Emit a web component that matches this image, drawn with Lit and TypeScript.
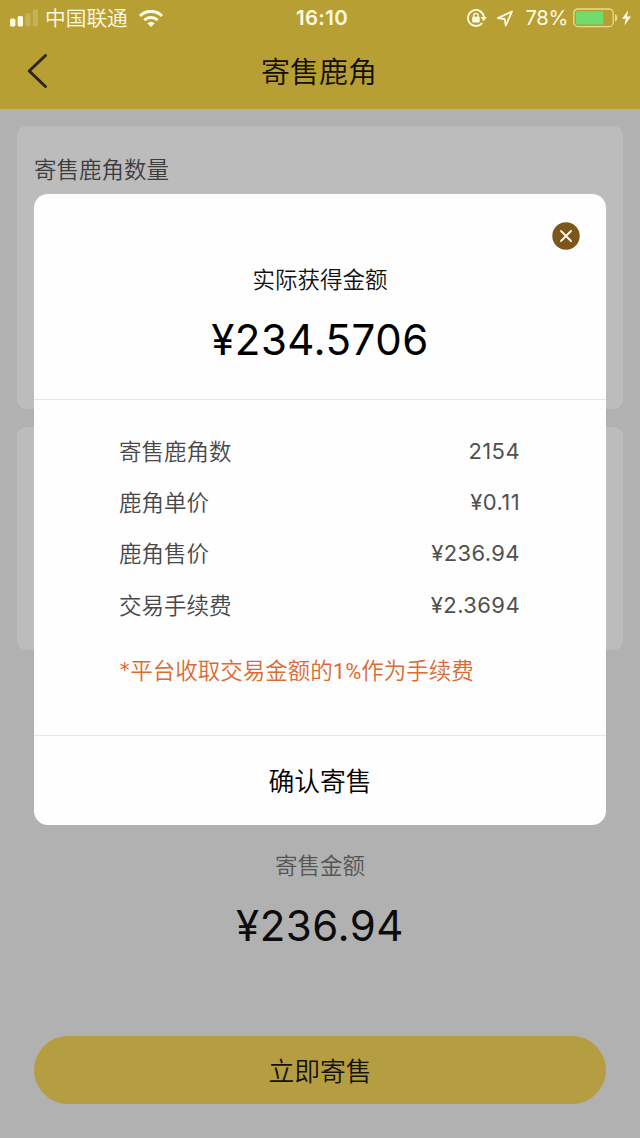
import { LitElement, html, css } from "lit";
import { customElement } from "lit/decorators.js";

const ROWS: [string, string][] = [
  ["寄售鹿角数", "2154"],
  ["鹿角单价", "¥0.11"],
  ["鹿角售价", "¥236.94"],
  ["交易手续费", "¥2.3694"],
];

@customElement("status-bar")
class StatusBar extends LitElement {
  static styles = css`
    :host { display: grid; grid-template-columns: 1fr auto 1fr; align-items: center; height: 36px; padding: 0 9px 0 10px; color: #fffbe0; box-sizing: border-box; }
    .side { display: flex; align-items: center; }
    .right { justify-content: flex-end; }
    .carrier { font-size: 20.7px; line-height: 34px; margin: 2px 11px 0 7px; font-weight: 350; }
    .time { font-size: 20.4px; font-weight: 600; letter-spacing: 0.4px; padding: 0 0 2px 3px; }
    .pct { font-size: 20.2px; letter-spacing: -0.3px; margin: -2px 5px 0 11px; }
    svg { display: block; }
    .loc { margin-left: 9px; }
    .bolt { margin-left: 4px; }
  `;
  render() {
    return html`
      <div class="side">
        <svg width="28" height="18" viewBox="0 0 28 18" fill="#fffbe0">
          <rect x="0" y="9.5" width="5.4" height="8" rx="1.6" />
          <rect x="7.6" y="7" width="5.4" height="10.5" rx="1.6" />
          <rect x="15.2" y="4" width="5.4" height="13.5" rx="1.6" opacity=".2" />
          <rect x="22.8" y="0.5" width="5.4" height="17" rx="1.6" opacity=".2" />
        </svg>
        <span class="carrier">中国联通</span>
        <svg width="24" height="17" viewBox="0 0 24 17" fill="none" stroke="#fffbe0">
          <path d="M1 5.9a15.6 15.6 0 0 1 22 0" stroke-width="3.2" />
          <path d="M5.4 10.3a9.4 9.4 0 0 1 13.2 0" stroke-width="3" />
          <path d="M12 17l-3.7-3.8a5.3 5.3 0 0 1 7.4 0z" fill="#fffbe0" stroke="none" />
        </svg>
      </div>
      <span class="time">16:10</span>
      <div class="side right">
        <svg width="20" height="18" viewBox="0 0 20 18" fill="none" stroke="#fffbe0">
          <path d="M15.2 14A8 8 0 1 1 16.9 8" stroke-width="1.8" />
          <path d="M13.6 8h6.2l-3.1 4.2z" fill="#fffbe0" stroke="none" />
          <path d="M6.7 8.3V6.6a2.2 2.2 0 0 1 4.4 0v1.7" stroke-width="1.4" />
          <rect x="5.1" y="7.8" width="7.6" height="5.6" rx=".8" fill="#fffbe0" stroke="none" />
        </svg>
        <svg class="loc" width="18" height="17" viewBox="0 0 18 17" fill="none" stroke="#fffbe0" stroke-width="1.8" stroke-linejoin="round">
          <path d="M1.8 8.1L16 1.5 9.8 15.4 8.6 9z" />
        </svg>
        <span class="pct">78%</span>
        <svg width="45" height="20" viewBox="0 0 45 20">
          <rect x=".8" y="1" width="39.4" height="17.6" rx="4.2" fill="none" stroke="#ecdc8e" stroke-width="1.3" />
          <rect x="3" y="3.2" width="27.3" height="13.2" rx="1.6" fill="#6fdc6d" />
          <path d="M42 6.3c3.2 1 3.2 6 0 7z" fill="#ecdc8e" />
        </svg>
        <svg class="bolt" width="9" height="16" viewBox="0.6 0 9.7 16" fill="#fffbe0" preserveAspectRatio="none">
          <path d="M7.2.3L.6 8.8h4L3.2 15.6 10.3 6.4H6z" />
        </svg>
      </div>
    `;
  }
}

@customElement("confirm-dialog")
class ConfirmDialog extends LitElement {
  static styles = css`
    :host { display: flex; flex-direction: column; height: 631px; background: #fefefe; border-radius: 14px; overflow: hidden; }
    .head { height: 206px; box-sizing: border-box; border-bottom: 1.5px solid #e6e6e6; display: flex; flex-direction: column; align-items: center; }
    .close { align-self: flex-end; margin: 28px 26px 0 0; width: 28px; height: 28px; }
    .label { font-size: 22.5px; line-height: 32px; margin-top: 14px; color: #111; font-weight: 350; }
    .amount { font-size: 42px; line-height: 50px; margin-top: 19px; color: #000; letter-spacing: 0.5px; }
    .body { flex: 1; padding: 26px 86px 0 85px; }
    .row { display: flex; justify-content: space-between; height: 51.2px; line-height: 51.2px; font-size: 22.5px; color: #484848; font-weight: 350; }
    .val { font-size: 22px; font-weight: 400; letter-spacing: 0.4px; color: #505050; }
    .note { margin-top: 13px; font-size: 22.5px; line-height: 53px; color: #dc6a32; white-space: nowrap; font-weight: 350; }
    .rate { font-family: Roboto, sans-serif; font-size: 22px; font-weight: 400; }
    .ok { height: 90px; box-sizing: border-box; border-top: 1.5px solid #e6e6e6; padding-bottom: 2px; display: flex; align-items: center; justify-content: center; font-size: 25.8px; color: #000; font-weight: 350; }
  `;
  render() {
    return html`
      <div class="head">
        <svg class="close" viewBox="0 0 28 28">
          <circle cx="14" cy="14" r="13.7" fill="#7c561b" />
          <path d="M9 9l10 10M19 9L9 19" stroke="#fff8e6" stroke-width="1.9" stroke-linecap="round" />
        </svg>
        <div class="label">实际获得金额</div>
        <div class="amount">¥234.5706</div>
      </div>
      <div class="body">
        ${ROWS.map(([k, v]) => html`<div class="row"><span>${k}</span><span class="val">${v}</span></div>`)}
        <div class="note">*平台收取交易金额的<span class="rate">1%</span>作为手续费</div>
      </div>
      <div class="ok">确认寄售</div>
    `;
  }
}

@customElement("app-root")
class AppRoot extends LitElement {
  static styles = css`
    :host { display: flex; flex-direction: column; position: relative; width: 640px; height: 1138px; overflow: hidden; background: #b1b1b1; font-family: Inter, "Noto Sans CJK SC", sans-serif; }
    .top { height: 109px; background: #b79f34; }
    .nav { height: 70px; display: grid; grid-template-columns: 68px 1fr 68px; align-items: center; }
    .back { margin-left: 26px; display: block; }
    .title { text-align: center; font-size: 29px; line-height: 44px; padding: 3px 2px 0 0; color: #120e02; font-weight: 350; }
    .cards { display: flex; flex-direction: column; gap: 18px; padding: 17px 17px 0; }
    .card { background: #bcbcbc; border-radius: 9px; box-sizing: border-box; padding: 27px 17px; font-size: 22.5px; line-height: 34px; color: #3c3c3c; font-weight: 350; }
    .first { height: 283px; }
    .second { height: 223px; }
    .total { display: flex; flex-direction: column; align-items: center; margin-top: 199px; }
    .tlabel { font-size: 22.5px; line-height: 34px; color: #555; font-weight: 350; }
    .tamount { font-size: 42px; line-height: 50px; margin-top: 18px; color: #0c0c0c; letter-spacing: 0.5px; }
    .submit { margin: 85px 34px 0; height: 68px; box-sizing: border-box; padding-bottom: 2px; border-radius: 34px; background: #b59d42; display: flex; align-items: center; justify-content: center; font-size: 25.8px; color: #14100a; font-weight: 350; }
    .dialog { position: absolute; left: 34px; right: 34px; top: 194px; }
  `;
  render() {
    return html`
      <div class="top">
        <status-bar></status-bar>
        <div class="nav">
          <svg class="back" width="22" height="36" viewBox="0 0 22 36" fill="none" stroke="#2f2508" stroke-width="3" stroke-linecap="round" stroke-linejoin="round">
            <path d="M19.5 2.5L3.2 18l16.3 15.5" />
          </svg>
          <div class="title">寄售鹿角</div>
        </div>
      </div>
      <div class="cards">
        <div class="card first">寄售鹿角数量</div>
        <div class="card second"></div>
      </div>
      <div class="total">
        <div class="tlabel">寄售金额</div>
        <div class="tamount">¥236.94</div>
      </div>
      <div class="submit">立即寄售</div>
      <confirm-dialog class="dialog"></confirm-dialog>
    `;
  }
}
